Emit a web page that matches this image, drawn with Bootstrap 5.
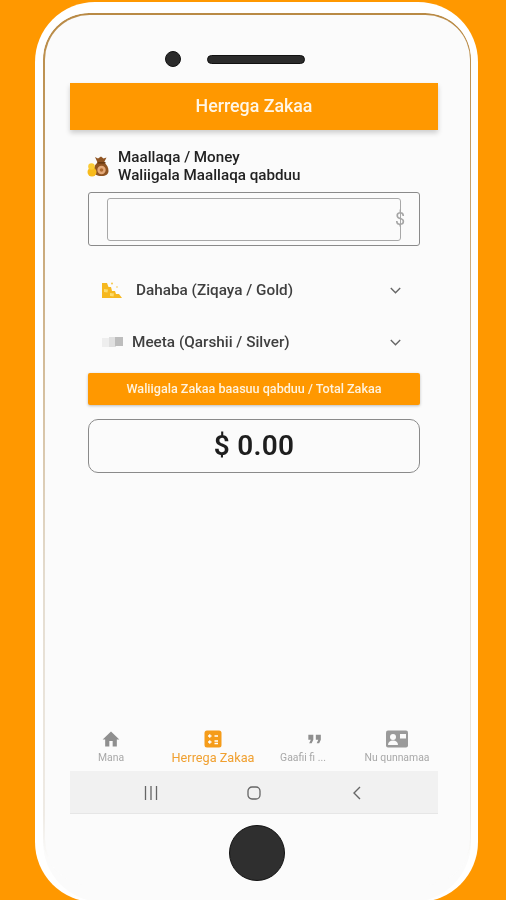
<!DOCTYPE html>
<html lang="en">
<head>
<meta charset="utf-8">
<meta name="viewport" content="width=device-width, initial-scale=1.0">
<link href="https://cdn.jsdelivr.net/npm/bootstrap@5.3.1/dist/css/bootstrap.min.css" rel="stylesheet">
<title>Herrega Zakaa</title>
<style>
html, body { height: 900px; overflow: hidden; }
body { background: #ff9800; font-family: Roboto, "Liberation Sans", sans-serif; color: #222; }
.phone { position: relative; margin: 2px 0 0 35px; width: 443px; height: 900px; padding: 0 40px 0 35px; background: #fff; border-radius: 60px; }
.phone::before { content: ""; position: absolute; inset: 11px 7px 17px 8px; padding: 1.5px; border-radius: 46px; background: linear-gradient(#b98a45 0, #c9a878 25%, #e4dccf 65%, #efebe5 92%, #fbfbfb 97%); -webkit-mask: linear-gradient(#000 0 0) content-box, linear-gradient(#000 0 0); -webkit-mask-composite: xor; mask-composite: exclude; z-index: 1; }
.phone::after { content: ""; position: absolute; inset: 11px 7px 0 8px; border-radius: 46px 46px 60px 60px; background: #fbfbfb; }
.soft { filter: blur(.5px); position: relative; z-index: 2; }
.cam-row { height: 81px; padding: 49px 0 0 95px; gap: 26px; }
.cam { width: 16px; height: 16px; border-radius: 50%; background: #2b2b2b; border: 1px solid #111; }
.speaker { width: 98px; height: 9px; margin-top: 4px; border-radius: 5px; background: #2b2b2b; border: 1px solid #111; }
.screen { height: 731px; }
.appbar { height: 47px; background: #ff9800; color: #fff6e6; font-size: 17.8px; font-weight: 500; box-shadow: 0 3px 5px rgba(0,0,0,.18); }
.money-row { margin: 18px 0 0 17px; font-size: 15.2px; font-weight: 500; line-height: 18px; color: #222; gap: 9px; }
.input-outer { position: relative; margin: 8px 18px 0; height: 54px; padding: 5px 18px 4px; border: 1px solid #8a8a8a; border-radius: 3px; }
.input-inner { height: 100%; border: 1.5px solid #a8a8a8; border-radius: 3px; }
.dollar { position: absolute; right: 14px; top: 15px; font-size: 18px; color: #a5a5a5; line-height: 22px; }
.metal-row { height: 20px; font-size: 15.3px; font-weight: 500; color: #3f3f3f; }
.gold-row { margin: 34px 37px 0 31px; }
.silver-row { margin: 32px 37px 0 32px; }
.metal-name { flex-grow: 1; }
.gold-row .metal-name { padding-left: 13px; }
.silver-row .metal-name { padding-left: 9px; }
.total-btn { margin: 21px 18px 0; height: 32px; background: #ff9800; color: #fff3de; font-size: 12.6px; font-weight: 500; border-radius: 2px; box-shadow: 0 1px 3px rgba(0,0,0,.25); }
.total-box { margin: 14px 18px 0; height: 54px; border: 1px solid #8a8a8a; border-radius: 10px; font-size: 28px; font-weight: 600; color: #1e1e1e; letter-spacing: .3px; }
.tabs { height: 47px; }
.tab { width: 82px; padding-top: 5px; font-size: 10.4px; color: #a8a8a8; line-height: 12px; }
.tab svg { display: block; height: 20px; margin: 0 auto 3px; }
.tab-on { width: 122px; color: #f0a030; font-size: 12.7px; }
.tab-cut { display: block; padding-right: 24px; }
.sysbar { height: 43px; background: #f1f1f1; border-bottom: 1px solid #e6e6e6; }
.sys-slot { width: 103px; }
.home-btn { width: 56px; height: 56px; margin: 11px 0 0 159px; border-radius: 50%; background: #2f2f2f; border: 1px solid #111; }
</style>
</head>
<body>
<div class="phone">
  <div class="soft">
    <div class="cam-row d-flex">
      <div class="cam"></div>
      <div class="speaker"></div>
    </div>
    <div class="screen d-flex flex-column">
      <div class="appbar d-flex align-items-center justify-content-center">Herrega Zakaa</div>

      <div class="money-row d-flex align-items-center">
        <svg width="22" height="22" viewBox="0 0 22 22">
          <path d="M8 2l3 1.500L14 1.500l2.500 2 3-1-2.500 5c3 2 4.500 5 4.500 8.500 0 3-2.500 5-7 5s-8-2-8-5c0-3.500 1.500-6.500 4-8.500z" fill="#8f5422"/>
          <circle cx="14.500" cy="15" r="4.200" fill="#e3a878"/>
          <circle cx="14.500" cy="15" r="1.800" fill="#b06a30"/>
          <rect x="10.500" y="7" width="8" height="1.600" fill="#6a3a12"/>
          <circle cx="5" cy="17" r="4.500" fill="#f8bb1c"/>
          <circle cx="4.500" cy="11.500" r="3.300" fill="#fbcb35"/>
        </svg>
        <div>Maallaqa / Money<br>Waliigala Maallaqa qabduu</div>
      </div>

      <div class="input-outer">
        <div class="input-inner"></div>
        <span class="dollar">$</span>
      </div>

      <div class="metal-row gold-row d-flex align-items-center">
        <svg width="22" height="18" viewBox="0 0 22 18">
          <path d="M1 2h5l1.500 4H10l1 4h3l1 3h3l3 4H1z" fill="#f6b81f"/>
          <path d="M3 8l4 .5-.5 3-3.500-.5zM9 12l4 .5-.5 3-3.500-.5z" fill="#fcdc6c"/>
          <circle cx="11" cy="2.500" r="1" fill="#f6c94a"/>
          <circle cx="16" cy="6" r=".8" fill="#f6c94a"/>
        </svg>
        <span class="metal-name">Dahaba (Ziqaya / Gold)</span>
        <svg width="11" height="7" viewBox="0 0 11 7"><path d="M.8 1l4.700 4.700L10.200 1" fill="none" stroke="#666" stroke-width="1.400"/></svg>
      </div>

      <div class="metal-row silver-row d-flex align-items-center">
        <svg width="21" height="14" viewBox="0 0 21 14">
          <rect x="0" y="3" width="11" height="9" fill="#eeeeee"/>
          <rect x="7" y="2" width="7" height="10" fill="#e0e0e0"/>
          <rect x="13" y="2" width="8" height="9" fill="#bdbdbd"/>
        </svg>
        <span class="metal-name">Meeta (Qarshii / Silver)</span>
        <svg width="11" height="7" viewBox="0 0 11 7"><path d="M.8 1l4.700 4.700L10.200 1" fill="none" stroke="#666" stroke-width="1.400"/></svg>
      </div>

      <div class="total-btn d-flex align-items-center justify-content-center">Waliigala Zakaa baasuu qabduu / Total Zakaa</div>
      <div class="total-box d-flex align-items-center justify-content-center">$ 0.00</div>

      <div class="tabs d-flex mt-auto">
        <div class="tab text-center">
          <svg viewBox="0 0 24 24" width="20"><path d="M10 21v-6.500h4V21h5v-8.500h3L12 3 2 12.500h3V21z" fill="#8f8f8f"/></svg>
          Mana
        </div>
        <div class="tab tab-on text-center">
          <svg viewBox="0 0 20 20" width="20">
            <rect x="1.500" y="1.500" width="17" height="17" rx="2.500" fill="#f59c1a"/>
            <path d="M5 7h3.500M11.500 7H15M5 13h3.500M6.750 11.300v3.400M11.500 12h3.500M11.500 14.500h3.500" stroke="#fff" stroke-width="1.300"/>
            <path d="M6.750 5.300v3.400" stroke="#fff" stroke-width="1.300"/>
          </svg>
          Herrega Zakaa
        </div>
        <div class="tab text-center">
          <svg viewBox="0 0 24 24" width="20"><path d="M5 17h3l2-4V7H4v6h3zm9 0h3l2-4V7h-6v6h3z" fill="#8f8f8f"/></svg>
          <span class="tab-cut">Gaafii fi ...</span>
        </div>
        <div class="tab text-center">
          <svg viewBox="0 0 24 20" width="24">
            <rect x="1" y="1.500" width="22" height="17" rx="2" fill="#9a9a9a"/>
            <circle cx="8" cy="8" r="3" fill="#fbfbfb"/>
            <path d="M3 16c0-3 2-4.500 5-4.500s5 1.500 5 4.500z" fill="#fbfbfb"/>
            <rect x="15" y="5" width="6" height="4.500" fill="#fbfbfb"/>
          </svg>
          Nu qunnamaa
        </div>
      </div>

      <div class="sysbar d-flex align-items-center justify-content-center">
        <div class="sys-slot text-center">
          <svg width="14" height="14" viewBox="0 0 14 14"><path d="M1.500 0v14M7 0v14M12.500 0v14" stroke="#666" stroke-width="1.300"/></svg>
        </div>
        <div class="sys-slot text-center">
          <svg width="14" height="14" viewBox="0 0 14 14"><rect x="1" y="1" width="12" height="12" rx="4" fill="none" stroke="#666" stroke-width="1.300"/></svg>
        </div>
        <div class="sys-slot text-center">
          <svg width="10" height="14" viewBox="0 0 10 14"><path d="M8 1L2 7l6 6" fill="none" stroke="#666" stroke-width="1.400"/></svg>
        </div>
      </div>
    </div>
    <div class="home-btn"></div>
  </div>
</div>
<script src="https://cdn.jsdelivr.net/npm/bootstrap@5.3.1/dist/js/bootstrap.bundle.min.js"></script>
</body>
</html>
